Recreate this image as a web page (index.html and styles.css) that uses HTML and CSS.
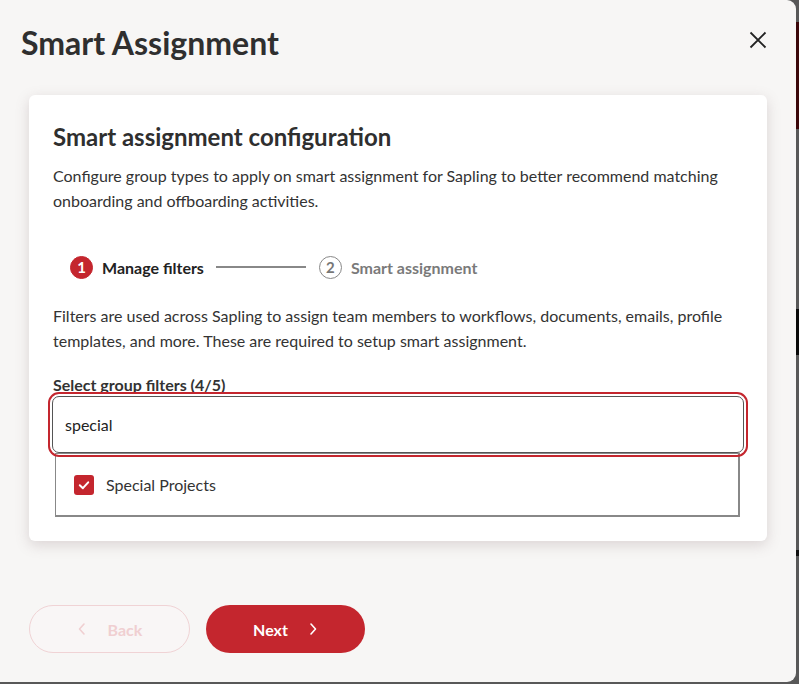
FILE: index.html
```html
<!DOCTYPE html>
<html lang="en">
<head>
    <meta charset="UTF-8">
    <meta name="viewport" content="width=device-width, initial-scale=1.0">
    <title>Smart Assignment</title>
    <link rel="stylesheet" href="styles.css">
</head>
<body>
    <div class="modal">
        <div class="modal-header">
            <h1>Smart Assignment</h1>
            <button class="close-btn" aria-label="Close">
                <svg width="18" height="18" viewBox="0 0 18 18"><path d="M1.5 1.5L16.5 16.5M16.5 1.5L1.5 16.5" stroke="#222" stroke-width="1.8" fill="none"/></svg>
            </button>
        </div>

        <div class="card">
            <h2>Smart assignment configuration</h2>
            <p class="intro">Configure group types to apply on smart assignment for Sapling to better recommend matching onboarding and offboarding activities.</p>

            <div class="stepper">
                <div class="step active">
                    <span class="step-num">1</span>
                    <span class="step-label">Manage filters</span>
                </div>
                <span class="step-line"></span>
                <div class="step">
                    <span class="step-num">2</span>
                    <span class="step-label">Smart assignment</span>
                </div>
            </div>

            <p class="info">Filters are used across Sapling to assign team members to workflows, documents, emails, profile templates, and more. These are required to setup smart assignment.</p>

            <label class="field-label" for="filterSearch">Select group filters (4/5)</label>
            <div class="select-wrap">
                <div class="focus-ring">
                    <input id="filterSearch" class="search-input" type="text" value="special">
                </div>
                <ul class="options">
                    <li class="option">
                        <span class="checkbox">
                            <svg width="14" height="14" viewBox="0 0 14 14"><path d="M2.8 7.3L5.9 10.2L11.2 4.3" stroke="#fff" stroke-width="2" fill="none" stroke-linecap="round" stroke-linejoin="round"/></svg>
                        </span>
                        Special Projects
                    </li>
                </ul>
            </div>
        </div>

        <div class="actions">
            <button class="btn btn-back" disabled>
                <svg width="10" height="14" viewBox="0 0 10 14"><path d="M7 2L2.5 7L7 12" stroke="currentColor" stroke-width="1.6" fill="none" stroke-linecap="round" stroke-linejoin="round"/></svg>
                Back
            </button>
            <button class="btn btn-next">
                Next
                <svg width="10" height="14" viewBox="0 0 10 14"><path d="M3 2L7.5 7L3 12" stroke="currentColor" stroke-width="1.6" fill="none" stroke-linecap="round" stroke-linejoin="round"/></svg>
            </button>
        </div>
    </div>
</body>
</html>
```

FILE: styles.css
```css
* {
    box-sizing: border-box;
}

body {
    margin: 0;
    font-family: Lato, "Open Sans", sans-serif;
    color: #333;
    background: linear-gradient(to bottom,
        #585858 0, #585858 22px,
        #3b070a 22px, #3b070a 129px,
        #585858 129px, #585858 309px,
        #0a0a0a 309px, #0a0a0a 355px,
        #585858 355px, #585858 550px,
        #111 550px, #111 556px,
        #585858 556px);
    height: 684px;
    overflow: hidden;
}

.modal {
    width: 796px;
    height: 682px;
    background-color: #f7f6f5;
    border-radius: 0 9px 9px 0;
    padding: 0 29px 0 29px;
}

.modal-header {
    display: flex;
    justify-content: space-between;
    align-items: flex-start;
    height: 95px;
    padding-top: 24px;
}

.modal-header h1 {
    margin: 0 0 0 -8px;
    font-size: 32px;
    line-height: 38px;
    font-weight: 700;
    color: #2f2f2f;
}

.close-btn {
    background: none;
    border: none;
    padding: 0;
    margin: 7px 0 0 0;
    cursor: pointer;
    display: flex;
}

.card {
    background-color: white;
    border-radius: 6px;
    box-shadow: 0 4px 14px rgba(120, 90, 95, 0.22);
    padding: 27px 24px 24px 24px;
}

.card h2 {
    margin: 0 0 12px 0;
    font-size: 24px;
    line-height: 29px;
    font-weight: 700;
    color: #2f2f2f;
}

.intro, .info {
    margin: 0;
    font-size: 16px;
    line-height: 25px;
    color: #333;
}

.stepper {
    display: flex;
    align-items: center;
    margin: 42px 0 24px 17px;
    height: 24px;
}

.step {
    display: flex;
    align-items: center;
    gap: 9px;
}

.step-num {
    width: 23px;
    height: 23px;
    border-radius: 50%;
    border: 1.5px solid #888;
    color: #777;
    font-size: 15px;
    font-weight: 700;
    display: flex;
    align-items: center;
    justify-content: center;
}

.step-label {
    font-size: 16px;
    font-weight: 700;
    color: #7a7a7a;
}

.step.active .step-num {
    background-color: #c4262e;
    border-color: #c4262e;
    color: white;
}

.step.active .step-label {
    color: #222;
}

.step-line {
    width: 90px;
    height: 1.5px;
    background-color: #888;
    margin: 0 13px 0 12px;
}

.field-label {
    display: block;
    margin-top: 23px;
    font-size: 16px;
    font-weight: 700;
    color: #333;
    line-height: 18px;
}

.select-wrap {
    margin: 0 -5px 0 -5px;
}

.focus-ring {
    border: 2px solid #c4262e;
    border-radius: 11px;
    padding: 2px;
    margin-top: -2px;
    position: relative;
    z-index: 1;
}

.search-input {
    display: block;
    width: 100%;
    height: 57px;
    border: 1px solid #555;
    border-radius: 7px;
    padding: 0 12px;
    font-family: inherit;
    font-size: 16px;
    color: #222;
    outline: none;
}

.options {
    list-style: none;
    margin: -4px 8px 0 7px;
    padding: 0;
    border: 1px solid #888;
    border-width: 1px 2px 2px 1px;
    background: white;
}

.option {
    display: flex;
    align-items: center;
    gap: 12px;
    height: 61px;
    padding: 0 18px 0 18px;
    font-size: 16px;
    color: #333;
}

.checkbox {
    width: 20px;
    height: 20px;
    border-radius: 3px;
    background-color: #c4262e;
    display: flex;
    align-items: center;
    justify-content: center;
}

.actions {
    display: flex;
    gap: 16px;
    margin-top: 64px;
}

.btn {
    height: 48px;
    border-radius: 24px;
    font-family: inherit;
    font-size: 16px;
    font-weight: 700;
    display: flex;
    align-items: center;
    justify-content: center;
    cursor: pointer;
}

.btn-back {
    width: 161px;
    gap: 21px;
    background-color: #f9f6f6;
    border: 1px solid #f0d3d5;
    color: #f0cfd1;
    cursor: default;
}

.btn-next {
    width: 159px;
    gap: 20px;
    background-color: #c4262e;
    border: none;
    color: white;
}

.btn-next:hover {
    background-color: #a81f26;
}
```
